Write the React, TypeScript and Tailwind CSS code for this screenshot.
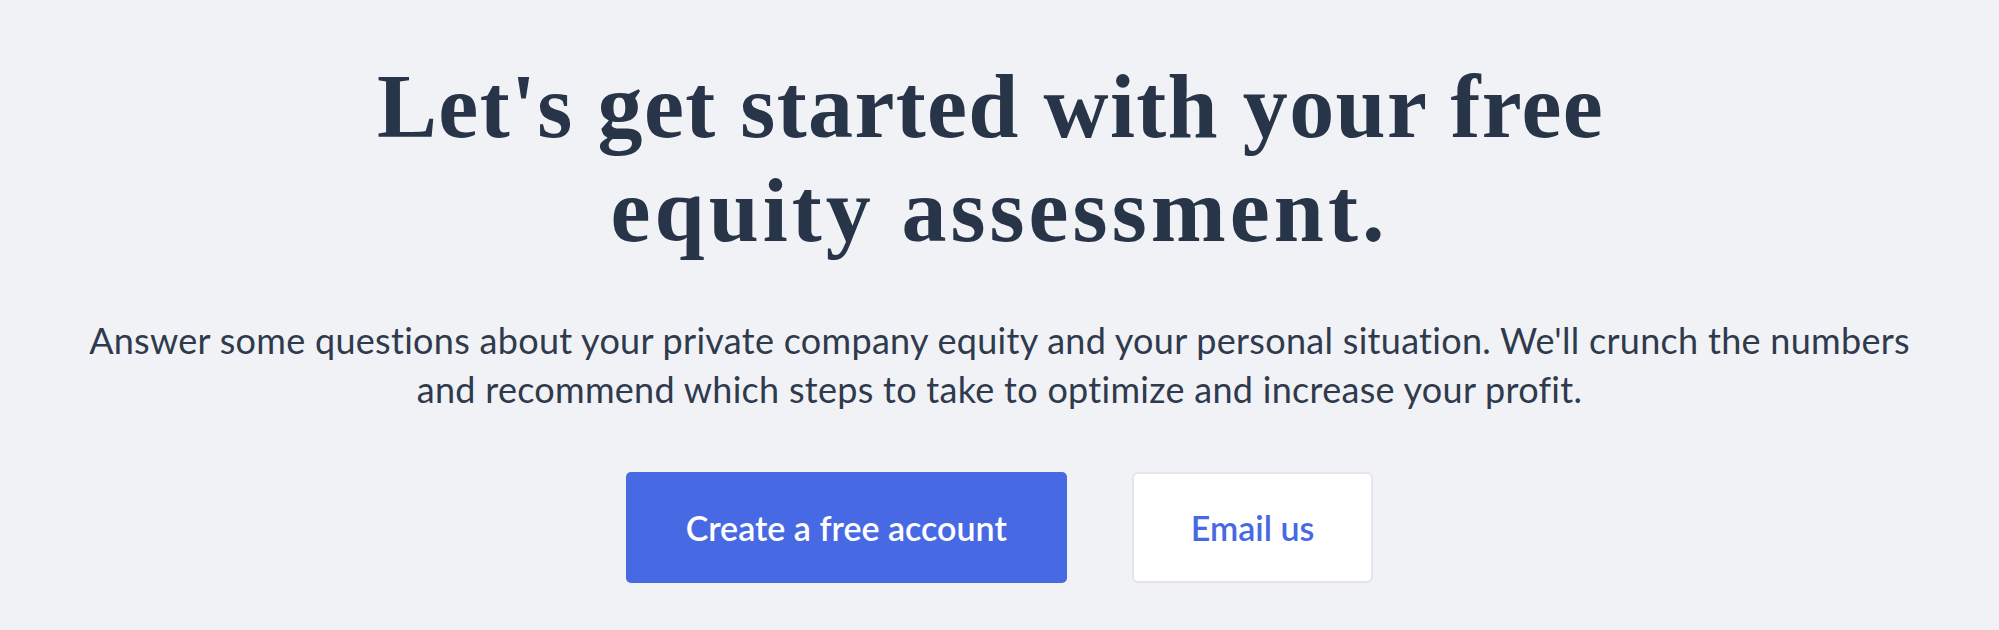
export default function App() {
  return (
    <div className="min-h-[630px] w-full bg-[#f0f2f6] flex flex-col items-center pt-[55px] font-['Lato','Liberation_Sans',sans-serif]">
      <h1 className="flex flex-col items-center font-['Liberation_Serif',serif] font-bold text-[90px] leading-[104px] text-[#283548]">
        <span className="tracking-[0.015em] pr-[18px]">Let's get started with your free</span>
        <span className="tracking-[0.045em]">equity assessment.</span>
      </h1>

      <p className="mt-[53px] text-center text-[36px] leading-[49px] tracking-[0.008em] text-[#2f3a4d]">
        Answer some questions about your private company equity and your personal situation. We'll crunch the numbers
        <br />
        and recommend which steps to take to optimize and increase your profit.
      </p>

      <div className="mt-[58px] flex gap-[65px]">
        <button className="h-[111px] px-[60px] rounded-[5px] bg-[#4869e4] text-white text-[34px] font-semibold">
          Create a free account
        </button>
        <button className="h-[111px] px-[57px] rounded-[6px] bg-white border-2 border-[#e3e5ea] text-[#4869e4] text-[34px] font-semibold">
          Email us
        </button>
      </div>
    </div>
  );
}
